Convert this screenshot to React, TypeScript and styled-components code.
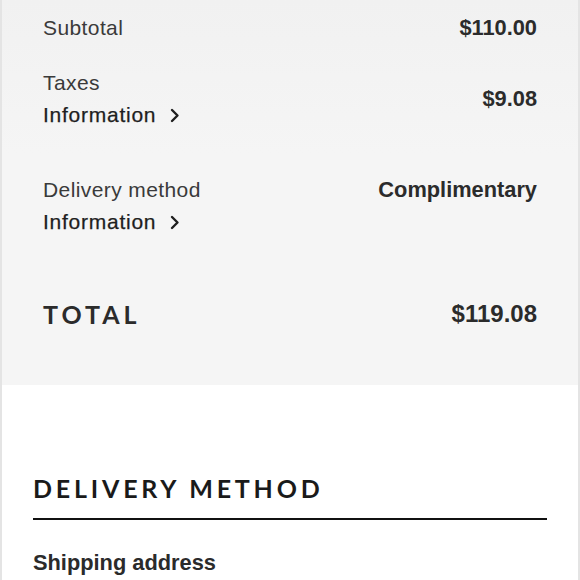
import styled, { createGlobalStyle } from "styled-components";

const GlobalStyle = createGlobalStyle`
  html, body {
    margin: 0;
    padding: 0;
    background: #ffffff;
  }
  body {
    font-family: "Liberation Sans", Arial, sans-serif;
    color: #2b2b2b;
  }
`;

const Page = styled.div`
  width: 580px;
  height: 580px;
  overflow: hidden;
  box-sizing: border-box;
  border-left: 2px solid #e4e4e4;
  border-right: 2px solid #e4e4e4;
  display: flex;
  flex-direction: column;
`;

const Summary = styled.section`
  background: linear-gradient(#f1f1f1, #f5f5f5 40%, #f5f5f5);
  padding: 12px 41px 55px 41px;
  display: flex;
  flex-direction: column;
`;

const Row = styled.div<{ $top?: number; $align?: string }>`
  display: flex;
  justify-content: space-between;
  align-items: ${({ $align }) => $align ?? "flex-start"};
  margin-top: ${({ $top }) => $top ?? 0}px;
`;

const LabelStack = styled.div`
  display: flex;
  flex-direction: column;
`;

const Label = styled.span`
  font-size: 21px;
  line-height: 32px;
  letter-spacing: 0.4px;
  color: #3a3a3a;
`;

const InfoLink = styled.a`
  display: flex;
  align-items: center;
  gap: 14px;
  font-size: 21px;
  line-height: 32px;
  letter-spacing: 0.75px;
  color: #1e1e1e;
  text-decoration: none;
  -webkit-text-stroke: 0.25px #1e1e1e;
`;

const Value = styled.span<{ $size?: number }>`
  font-size: ${({ $size }) => $size ?? 21.8}px;
  line-height: 32px;
  font-weight: 700;
  color: #2b2b2b;
`;

const TotalLabel = styled.span`
  font-family: Lato, "Liberation Sans", sans-serif;
  font-weight: 700;
  font-size: 25px;
  line-height: 30px;
  letter-spacing: 4px;
  color: #2b2b2b;
`;

const Delivery = styled.section`
  background: #ffffff;
  padding: 87px 31px 0 31px;
  display: flex;
  flex-direction: column;
`;

const Heading = styled.h2`
  margin: 0;
  font-family: Lato, "Liberation Sans", sans-serif;
  font-weight: 700;
  font-size: 25px;
  line-height: 32px;
  letter-spacing: 3.8px;
  color: #1a1a1a;
`;

const Rule = styled.hr`
  margin: 14px 0 0 0;
  border: none;
  height: 2px;
  background: #111111;
`;

const SubHeading = styled.h3`
  margin: 29px 0 0 0;
  font-size: 21.8px;
  line-height: 28px;
  font-weight: 700;
  color: #2b2b2b;
`;

function Chevron() {
  return (
    <svg width="10" height="15" viewBox="0 0 10 15" fill="none">
      <path
        d="M2 2 L7.5 7.5 L2 13"
        stroke="#1e1e1e"
        strokeWidth="2.4"
        strokeLinecap="round"
        strokeLinejoin="round"
      />
    </svg>
  );
}

export default function App() {
  return (
    <>
      <GlobalStyle />
      <Page>
        <Summary>
          <Row>
            <Label>Subtotal</Label>
            <Value>$110.00</Value>
          </Row>

          <Row $top={23} $align="center">
            <LabelStack>
              <Label>Taxes</Label>
              <InfoLink href="#">
                Information <Chevron />
              </InfoLink>
            </LabelStack>
            <Value>$9.08</Value>
          </Row>

          <Row $top={43}>
            <LabelStack>
              <Label>Delivery method</Label>
              <InfoLink href="#">
                Information <Chevron />
              </InfoLink>
            </LabelStack>
            <Value>Complimentary</Value>
          </Row>

          <Row $top={60} $align="center">
            <TotalLabel>TOTAL</TotalLabel>
            <Value $size={24}>$119.08</Value>
          </Row>
        </Summary>

        <Delivery>
          <Heading>DELIVERY METHOD</Heading>
          <Rule />
          <SubHeading>Shipping address</SubHeading>
        </Delivery>
      </Page>
    </>
  );
}
